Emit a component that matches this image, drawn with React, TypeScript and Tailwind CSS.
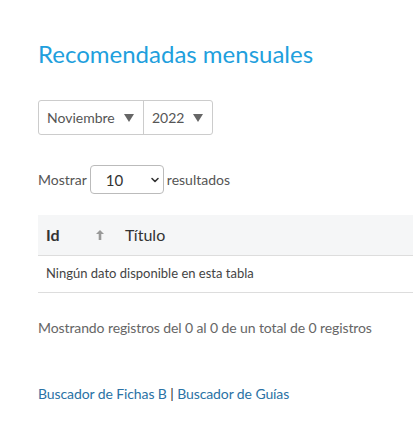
import { ChevronDown } from "lucide-react";

function Caret() {
  return (
    <svg viewBox="0 0 10 8" className="h-[8px] w-[10px] fill-[#666]">
      <path d="M0 0h10L5 8z" />
    </svg>
  );
}

export default function App() {
  return (
    <div className="min-h-[437px] bg-white pl-[38px] font-['Lato',sans-serif] text-[#555]">
      <h1 className="pt-[39px] text-[24px] leading-[30px] text-[#1fa0dd]">Recomendadas mensuales</h1>

      <div className="mt-[31px] inline-flex h-[35px] rounded-[3px] border border-[#ccc] text-[14px] text-[#555]">
        <div className="flex w-[104px] items-center gap-[9px] pl-[8px]">
          Noviembre
          <Caret />
        </div>
        <div className="flex w-[69px] items-center gap-[9px] border-l border-[#ccc] pl-[8px]">
          2022
          <Caret />
        </div>
      </div>

      <div className="mt-[30px] flex items-center gap-[3px] text-[14px]">
        <span>Mostrar</span>
        <div className="flex h-[29px] w-[74px] items-center justify-between rounded-[4px] border border-[#bbb] pl-[15px] pr-[2px] text-[15px] text-[#333]">
          <span className="mt-[2px]">10</span>
          <ChevronDown className="h-[12px] w-[12px] text-[#333]" strokeWidth={3.2} />
        </div>
        <span>resultados</span>
      </div>

      <div className="mt-[21px]">
        <div className="flex h-[41px] items-center border-b border-[#ddd] bg-[#f5f6f7] text-[16px] text-[#333]">
          <span className="w-[58px] pl-[8px] font-bold">Id</span>
          <span className="w-[29px]">
            <svg viewBox="0 0 8 10" className="h-[10px] w-[8px] fill-[#999]">
              <path d="M4 0L8 4H5.3V10H2.7V4H0z" />
            </svg>
          </span>
          <span>Título</span>
        </div>
        <div className="flex h-[37px] items-center border-b border-[#ddd] pl-[8px] text-[13px] text-[#444]">
          Ningún dato disponible en esta tabla
        </div>
      </div>

      <p className="mt-[24px] whitespace-nowrap text-[14px] tracking-[-0.1px] text-[#666]">
        Mostrando registros del 0 al 0 de un total de 0 registros
      </p>

      <p className="mt-[45px] text-[14px] tracking-[-0.1px] text-[#2a72a5]">
        Buscador de Fichas B <span className="text-[#333]">|</span> Buscador de Guías
      </p>
    </div>
  );
}
